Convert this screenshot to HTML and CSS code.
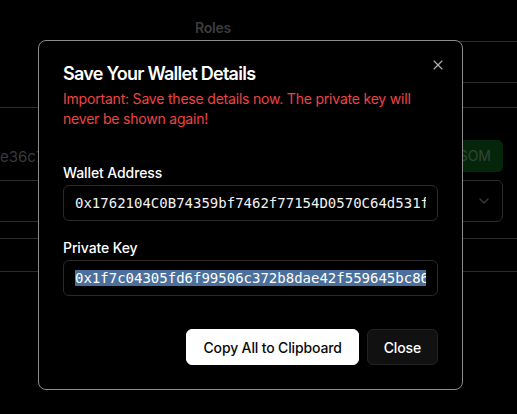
FILE: index.html
```html
<!DOCTYPE html>
<html lang="en">
<head>
<meta charset="utf-8">
<title>Save Your Wallet Details</title>
<link rel="stylesheet" href="styles.css">
</head>
<body>
<div class="page">
  <div class="backdrop">
    <div class="row row-head"><span class="col-title">Roles</span></div>
    <div class="row row-two"></div>
    <div class="row row-three"></div>
    <div class="row row-four">
      <span class="hash">e36c7f0a21d9</span>
      <span class="badge">SOM</span>
    </div>
    <div class="select-box">
      <svg class="chevron" width="16" height="16" viewBox="0 0 24 24" fill="none" stroke="currentColor" stroke-width="2" stroke-linecap="round" stroke-linejoin="round"><path d="m6 9 6 6 6-6"/></svg>
    </div>
    <div class="row row-six"></div>
    <div class="row row-seven"></div>
  </div>

  <div class="dialog" role="dialog">
    <button class="dialog-x" aria-label="Close">
      <svg width="16" height="16" viewBox="0 0 24 24" fill="none" stroke="currentColor" stroke-width="1.6" stroke-linecap="round" stroke-linejoin="round"><path d="M18 6 6 18"/><path d="m6 6 12 12"/></svg>
    </button>
    <h2 class="dialog-title">Save Your Wallet Details</h2>
    <p class="dialog-desc">Important: Save these details now. The private key will never be shown again!</p>

    <div class="field field-first">
      <label class="field-label">Wallet Address</label>
      <div class="field-input"><div class="field-clip"><span class="mono">0x1762104C0B74359bf7462f77154D0570C64d531f</span></div></div>
    </div>
    <div class="field">
      <label class="field-label">Private Key</label>
      <div class="field-input"><div class="field-clip"><span class="mono selected">0x1f7c04305fd6f99506c372b8dae42f559645bc86</span></div></div>
    </div>

    <div class="dialog-actions">
      <button class="btn btn-primary">Copy All to Clipboard</button>
      <button class="btn btn-dark">Close</button>
    </div>
  </div>
</div>
</body>
</html>
```

FILE: styles.css
```css
* { box-sizing: border-box; }

html, body {
  margin: 0;
  padding: 0;
  background: #000;
}

body {
  font-family: Inter, "Noto Sans", "Liberation Sans", sans-serif;
  color: #fff;
}

.page {
  position: relative;
  width: 517px;
  height: 414px;
  overflow: hidden;
  background: #000;
}

/* dimmed page behind the dialog */
.backdrop {
  width: 517px;
}

.row {
  border-bottom: 1px solid #2c2c2c;
}

.row-head {
  margin-left: 180px;
  height: 42px;
  padding: 18px 0 0 15px;
}

.col-title {
  display: block;
  font-size: 14px;
  line-height: 20px;
  font-weight: 600;
  letter-spacing: -0.2px;
  color: #3c3c3c;
}

.row-two {
  margin-left: 180px;
  height: 41px;
}

.row-three {
  height: 25px;
}

.row-four {
  height: 72px;
  border-bottom: none;
  display: flex;
  align-items: flex-start;
  justify-content: space-between;
}

.hash {
  margin-top: 39px;
  font-size: 15px;
  line-height: 20px;
  color: #3a3a3a;
  white-space: nowrap;
}

.badge {
  margin-top: 32px;
  margin-right: 14px;
  height: 32px;
  padding: 0 12px 0 30px;
  border-radius: 6px;
  background: #06260b;
  color: #2e4632;
  font-size: 14px;
  line-height: 32px;
}

.select-box {
  margin-left: -10px;
  width: 513px;
  height: 42px;
  border: 1px solid #2c2c2c;
  border-radius: 6px;
  display: flex;
  align-items: center;
  justify-content: flex-end;
  padding-right: 10px;
}

.chevron {
  color: #3a3a3a;
}

.row-six {
  height: 17px;
}

.row-seven {
  height: 33px;
}

/* dialog */
.dialog {
  position: absolute;
  left: 38px;
  top: 40px;
  width: 425px;
  padding: 24px;
  border: 1px solid #8c8c8c;
  border-radius: 8px;
  background: #000;
}

.dialog-x {
  position: absolute;
  top: 16px;
  right: 16px;
  width: 16px;
  height: 16px;
  padding: 0;
  border: none;
  background: none;
  color: #b4b4b4;
  display: flex;
}

.dialog-title {
  margin: 0;
  font-size: 18px;
  line-height: 18px;
  font-weight: 600;
  letter-spacing: -0.75px;
  color: #fff;
}

.dialog-desc {
  margin: 6px 0 0;
  font-size: 14px;
  line-height: 20px;
  letter-spacing: -0.2px;
  color: #ef4444;
}

.field {
  margin-top: 20px;
}

.field-first {
  margin-top: 37px;
}

.field-label {
  display: block;
  font-size: 14px;
  line-height: 14px;
  font-weight: 500;
  letter-spacing: -0.1px;
  color: #fff;
  margin-bottom: 5px;
}

.field-input {
  height: 36px;
  border: 1px solid #2a2a2a;
  border-radius: 6px;
  padding: 0 11px;
  display: flex;
  align-items: center;
}

.field-clip {
  flex: 1;
  min-width: 0;
  overflow: hidden;
  white-space: nowrap;
  line-height: 17px;
}

.mono {
  font-family: "DejaVu Sans Mono", "Liberation Mono", monospace;
  font-size: 14px;
  color: #f2f2f2;
}

.selected {
  background: #4b709c;
  color: #fff;
}

.dialog-actions {
  margin-top: 33px;
  display: flex;
  justify-content: flex-end;
  gap: 8px;
}

.btn {
  height: 36px;
  padding: 0 16px;
  border-radius: 6px;
  font-family: Inter, "Noto Sans", "Liberation Sans", sans-serif;
  font-size: 14px;
  font-weight: 500;
  letter-spacing: -0.15px;
  cursor: pointer;
}

.btn-primary {
  background: #fff;
  color: #0a0a0a;
  border: 1px solid #fff;
}

.btn-dark {
  background: #111;
  color: #fff;
  border: 1px solid #232323;
}
```
